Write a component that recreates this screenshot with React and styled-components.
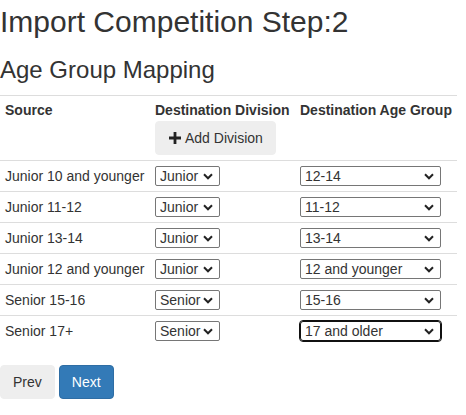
import React from 'react'
import styled, { createGlobalStyle } from 'styled-components'

const GlobalStyle = createGlobalStyle`
	html, body {
		margin: 0;
		padding: 0;
		background: #fff;
	}
	body {
		font-family: 'Liberation Sans', Arial, Helvetica, sans-serif;
		font-size: 14px;
		line-height: 1.42857;
		color: #333;
	}
	* {
		box-sizing: border-box;
	}
`

const rows = [
	{ source: 'Junior 10 and younger', division: 'Junior', group: '12-14' },
	{ source: 'Junior 11-12', division: 'Junior', group: '11-12' },
	{ source: 'Junior 13-14', division: 'Junior', group: '13-14' },
	{ source: 'Junior 12 and younger', division: 'Junior', group: '12 and younger' },
	{ source: 'Senior 15-16', division: 'Senior', group: '15-16' },
	{ source: 'Senior 17+', division: 'Senior', group: '17 and older', focused: true },
]

const groups = ['12-14', '11-12', '13-14', '12 and younger', '15-16', '17 and older']

function Dropdown({ value, options, width, focused }) {
	return (
		<SelectWrap $width={width}>
			<Select defaultValue={value} $focused={focused}>
				{options.map((o) => (
					<option key={o}>{o}</option>
				))}
			</Select>
			<Chevron viewBox='0 0 10 7'>
				<path d='M1 1.3l4 4 4-4' fill='none' stroke='#222' strokeWidth='2' />
			</Chevron>
		</SelectWrap>
	)
}

function App() {
	return (
		<Page>
			<GlobalStyle />
			<Title>Import Competition Step:2</Title>
			<SubTitle>Age Group Mapping</SubTitle>
			<Table>
				<colgroup>
					<col style={{ width: 150 }} />
					<col style={{ width: 145 }} />
					<col />
				</colgroup>
				<thead>
					<tr>
						<Th>Source</Th>
						<Th>
							Destination Division
							<AddButton type='button'>
								<PlusIcon viewBox='0 0 14 14'>
									<path d='M5.6 1h2.8v4.6H13v2.8H8.4V13H5.6V8.4H1V5.6h4.6z' fill='#222' />
								</PlusIcon>
								Add Division
							</AddButton>
						</Th>
						<Th>Destination Age Group</Th>
					</tr>
				</thead>
				<tbody>
					{rows.map((row) => (
						<tr key={row.source}>
							<Td>{row.source}</Td>
							<Td>
								<Dropdown value={row.division} options={['Junior', 'Senior']} width={65} />
							</Td>
							<Td>
								<Dropdown value={row.group} options={groups} width={141} focused={row.focused} />
							</Td>
						</tr>
					))}
				</tbody>
			</Table>
			<Actions>
				<Button type='button'>Prev</Button>
				<Button type='button' $primary>
					Next
				</Button>
			</Actions>
		</Page>
	)
}

export default App

const Page = styled.div`
	padding: 5px 0 0 0;
`
const Title = styled.h2`
	font-size: 30px;
	font-weight: 500;
	line-height: 1.1;
	margin: 0 0 10px;
	color: #333;
`
const SubTitle = styled.h3`
	font-size: 24px;
	font-weight: 500;
	line-height: 1.1;
	margin: 19px 0 12px;
	color: #333;
`
const Table = styled.table`
	width: 457px;
	border-collapse: collapse;
	border-spacing: 0;
	table-layout: fixed;
	margin-bottom: 19px;
`
const Th = styled.th`
	text-align: left;
	vertical-align: top;
	font-weight: bold;
	padding: 5px;
	border-top: 1px solid #ddd;
	white-space: nowrap;
`
const Td = styled.td`
	vertical-align: top;
	padding: 6px 5px 4px;
	border-top: 1px solid #ddd;
	white-space: nowrap;
`
const AddButton = styled.button`
	display: flex;
	align-items: center;
	gap: 3px;
	height: 34px;
	padding: 6px 12px;
	border: 1px solid #eee;
	border-radius: 4px;
	background: #eee;
	color: #333;
	font-family: inherit;
	font-size: 14px;
	font-weight: normal;
	line-height: 20px;
	cursor: pointer;
`
const PlusIcon = styled.svg`
	width: 14px;
	height: 14px;
	flex: none;
`
const SelectWrap = styled.div`
	position: relative;
	width: ${(p) => p.$width}px;
	height: 20px;
	margin-top: -1px;
`
const Select = styled.select`
	appearance: none;
	-webkit-appearance: none;
	display: block;
	width: 100%;
	height: 20px;
	margin: 0;
	padding: 0 16px 0 4px;
	font-family: inherit;
	font-size: 14px;
	line-height: 18px;
	color: #333;
	background: #fff;
	border: 1px solid ${(p) => (p.$focused ? '#111' : '#767676')};
	border-radius: ${(p) => (p.$focused ? '3px' : '2px')};
	outline: ${(p) => (p.$focused ? '1px solid #111' : 'none')};
	cursor: pointer;
`
const Chevron = styled.svg`
	position: absolute;
	right: 7px;
	top: 7px;
	width: 10px;
	height: 7px;
	pointer-events: none;
`
const Actions = styled.div`
	display: flex;
	gap: 4px;
`
const Button = styled.button`
	height: 34px;
	padding: 6px 12px;
	font-family: inherit;
	font-size: 14px;
	line-height: 20px;
	border-radius: 4px;
	border: 1px solid ${(p) => (p.$primary ? '#2e6da4' : '#eee')};
	background: ${(p) => (p.$primary ? '#337ab7' : '#eee')};
	color: ${(p) => (p.$primary ? '#fff' : '#333')};
	cursor: pointer;
`
